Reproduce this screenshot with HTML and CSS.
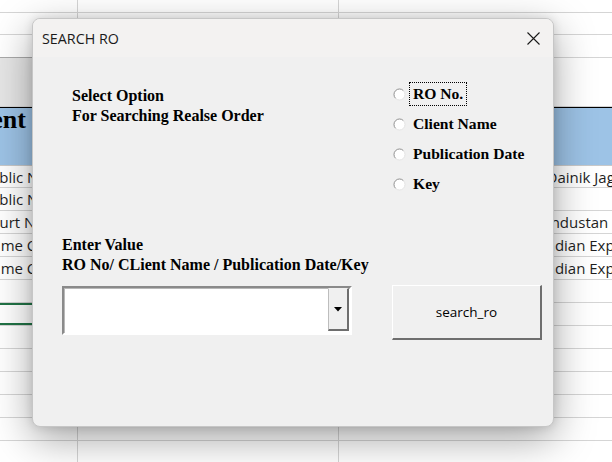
FILE: index.html
```html
<!DOCTYPE html>
<html>
<head>
<meta charset="utf-8">
<title>SEARCH RO</title>
<link rel="stylesheet" href="styles.css">
</head>
<body>
<div class="sheet">
  <div class="c"></div><div class="c"></div><div class="c"></div>
  <div class="c"></div><div class="c"></div><div class="c"></div>
  <div class="c dark-b"></div><div class="c"></div><div class="c"></div>
  <div class="c grayfill"></div><div class="c"></div><div class="c"></div>
  <div class="c hdr hdr-a"><span>Client</span></div><div class="c hdr"></div><div class="c hdr"></div>
  <div class="c t">Public Notice</div><div class="c"></div><div class="c t ctr">Dainik Jagran</div>
  <div class="c t">Public Notice</div><div class="c"></div><div class="c t ctr"></div>
  <div class="c t">Court Notice</div><div class="c"></div><div class="c t ctr">Hindustan Hindi</div>
  <div class="c t">Name Change</div><div class="c"></div><div class="c t ctr">Indian Express</div>
  <div class="c t">Name Change</div><div class="c"></div><div class="c t ctr">Indian Express</div>
  <div class="c"></div><div class="c"></div><div class="c"></div>
  <div class="c sel"></div><div class="c"></div><div class="c"></div>
  <div class="c"></div><div class="c"></div><div class="c"></div>
  <div class="c"></div><div class="c"></div><div class="c"></div>
  <div class="c"></div><div class="c"></div><div class="c"></div>
  <div class="c"></div><div class="c"></div><div class="c"></div>
  <div class="c"></div><div class="c"></div><div class="c"></div>
  <div class="c"></div><div class="c"></div><div class="c"></div>
</div>

<div class="dialog">
  <div class="titlebar">
    <span class="title">SEARCH RO</span>
    <svg class="close" width="13" height="13" viewBox="0 0 13 13"><path d="M0.5 0.5 L12.5 12.5 M12.5 0.5 L0.5 12.5" stroke="#1a1a1a" stroke-width="1.1" fill="none"/></svg>
  </div>
  <div class="dbody">
    <div class="top">
      <div class="prompt">Select Option<br>For Searching Realse Order</div>
      <div class="radios">
        <div class="opt">
          <svg class="radio" width="13" height="13" viewBox="0 0 13 13"><circle cx="6.5" cy="6.5" r="5.5" fill="#fff"/><path d="M2.6 10.4 A5.5 5.5 0 0 1 10.4 2.6" stroke="#8f8f8f" fill="none"/><path d="M10.4 2.6 A5.5 5.5 0 0 1 2.6 10.4" stroke="#e2e2e2" fill="none"/></svg>
          <span class="lbl focus">RO No.</span>
        </div>
        <div class="opt">
          <svg class="radio" width="13" height="13" viewBox="0 0 13 13"><circle cx="6.5" cy="6.5" r="5.5" fill="#fff"/><path d="M2.6 10.4 A5.5 5.5 0 0 1 10.4 2.6" stroke="#8f8f8f" fill="none"/><path d="M10.4 2.6 A5.5 5.5 0 0 1 2.6 10.4" stroke="#e2e2e2" fill="none"/></svg>
          <span class="lbl">Client Name</span>
        </div>
        <div class="opt">
          <svg class="radio" width="13" height="13" viewBox="0 0 13 13"><circle cx="6.5" cy="6.5" r="5.5" fill="#fff"/><path d="M2.6 10.4 A5.5 5.5 0 0 1 10.4 2.6" stroke="#8f8f8f" fill="none"/><path d="M10.4 2.6 A5.5 5.5 0 0 1 2.6 10.4" stroke="#e2e2e2" fill="none"/></svg>
          <span class="lbl">Publication Date</span>
        </div>
        <div class="opt">
          <svg class="radio" width="13" height="13" viewBox="0 0 13 13"><circle cx="6.5" cy="6.5" r="5.5" fill="#fff"/><path d="M2.6 10.4 A5.5 5.5 0 0 1 10.4 2.6" stroke="#8f8f8f" fill="none"/><path d="M10.4 2.6 A5.5 5.5 0 0 1 2.6 10.4" stroke="#e2e2e2" fill="none"/></svg>
          <span class="lbl">Key</span>
        </div>
      </div>
    </div>
    <div class="bottom">
      <div class="entry">
        <div class="prompt">Enter Value<br>RO No/ CLient Name / Publication Date/Key</div>
        <div class="combo">
          <div class="field"></div>
          <div class="drop"><svg width="8" height="5" viewBox="0 0 8 5"><path d="M0 0 H8 L4 4.5 Z" fill="#000"/></svg></div>
        </div>
      </div>
      <div class="btn">search_ro</div>
    </div>
  </div>
</div>
</body>
</html>
```

FILE: styles.css
```css
html, body {
  margin: 0;
  padding: 0;
}
body {
  width: 612px;
  height: 462px;
  overflow: hidden;
  background: #ffffff;
  position: relative;
}

/* spreadsheet background */
.sheet {
  display: grid;
  grid-template-columns: 100px 261px 508px;
  grid-template-rows: 13px 22px 23px 49px 59px 22px repeat(12, 23px);
  margin-left: -22px;
  font-family: "Open Sans", "Noto Sans", sans-serif;
  font-size: 15px;
  color: #1f1f1f;
}
.c {
  box-sizing: border-box;
  border-right: 1px solid #d5d5d5;
  border-bottom: 1px solid #d5d5d5;
  white-space: nowrap;
  overflow: visible;
  min-width: 0;
}
.t {
  display: flex;
  align-items: center;
  padding-left: 3px;
}
.ctr {
  justify-content: center;
  padding-left: 0;
}
.dark-b {
  border-bottom-color: #a9a9a9;
}
.grayfill {
  background: #e6e6e6;
}
.hdr {
  background: #9dc3e6;
  border-top: 1px solid #000;
  border-right-color: #9dc3e6;
  border-bottom-color: #c9c9c9;
}
.hdr-a {
  display: flex;
  justify-content: flex-end;
  padding-right: 51px;
  font-family: "Liberation Serif", "Times New Roman", serif;
  font-weight: bold;
  font-size: 26px;
  line-height: 24px;
  color: #000;
}
.sel {
  box-shadow: inset 0 2px 0 #217346, inset 0 -2px 0 #217346;
}

/* dialog */
.dialog {
  position: absolute;
  left: 32px;
  top: 18px;
  width: 522px;
  height: 409px;
  box-sizing: border-box;
  border: 1px solid #c6c6c6;
  border-radius: 8px;
  overflow: hidden;
  background: #f0f0f0;
  box-shadow: 0 12px 40px rgba(0, 0, 0, 0.36), 0 0 10px rgba(0, 0, 0, 0.12);
  display: flex;
  flex-direction: column;
}
.titlebar {
  height: 38px;
  flex: none;
  background: #f3f2f1;
  display: flex;
  align-items: center;
  justify-content: space-between;
  padding: 0 13px 0 9px;
}
.title {
  font-family: "Open Sans", "Noto Sans", sans-serif;
  font-size: 14.3px;
  color: #1a1a1a;
}
.close {
  display: block;
}
.dbody {
  flex: 1;
  display: grid;
  grid-template-rows: 178px auto;
  font-family: "Liberation Serif", "Times New Roman", serif;
  font-weight: bold;
  font-size: 16px;
  color: #000;
}
.top {
  display: flex;
  align-items: flex-start;
}
.prompt {
  line-height: 20px;
  white-space: nowrap;
}
.top .prompt {
  margin-left: 39px;
  margin-top: 29px;
  width: 321px;
  flex: none;
}
.radios {
  margin-top: 22px;
  display: flex;
  flex-direction: column;
}
.opt {
  height: 30px;
  display: flex;
  align-items: center;
}
.radio {
  display: block;
  flex: none;
}
.lbl {
  margin-left: 3px;
  padding: 0 3px;
  font-size: 15.6px;
  line-height: 22px;
  border: 1px dotted transparent;
}
.lbl.focus {
  border-color: #000;
}
.bottom {
  display: flex;
  align-items: flex-start;
  padding-left: 29px;
}
.entry {
  width: 290px;
  flex: none;
}
.combo {
  margin-top: 11px;
  box-sizing: border-box;
  width: 290px;
  height: 49px;
  display: flex;
  align-items: flex-start;
  border-style: solid;
  border-width: 2px;
  border-color: #8a8a8a #ffffff #ffffff #8a8a8a;
  background: #ffffff;
  box-shadow: inset 1px 1px 0 #b8b8b8;
}
.field {
  flex: 1;
}
.drop {
  box-sizing: border-box;
  width: 21px;
  height: 43px;
  margin-right: 1px;
  background: #f0f0f0;
  border-style: solid;
  border-width: 1px 2px 2px 1px;
  border-color: #f0f0f0 #6e6e6e #6e6e6e #bdbdbd;
  display: flex;
  align-items: center;
  justify-content: center;
}
.btn {
  margin-left: 40px;
  margin-top: 50px;
  box-sizing: border-box;
  width: 150px;
  height: 55px;
  background: #f0f0f0;
  border-style: solid;
  border-width: 1px 2px 2px 1px;
  border-color: #ffffff #6e6e6e #6e6e6e #ffffff;
  display: flex;
  align-items: center;
  justify-content: center;
  font-family: "Open Sans", "Noto Sans", sans-serif;
  font-weight: normal;
  font-size: 13.5px;
  color: #000;
}
```
